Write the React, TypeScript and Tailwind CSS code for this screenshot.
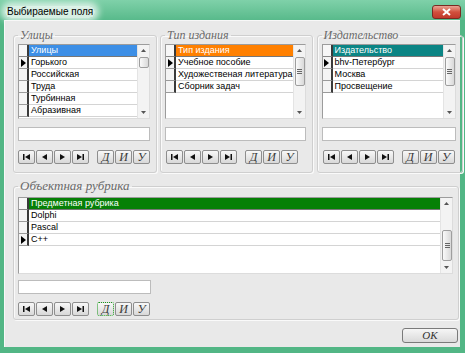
import React from 'react';

type GridProps = {
  header: string;
  color: string;
  rows: string[];
  current: number;
  h: string;
  thumbTop: string;
  thumbH: string;
  grip?: boolean;
};

function Tri() {
  return <div className="h-0 w-0 border-y-[4px] border-l-[5px] border-y-transparent border-l-black" />;
}

function Arrow({ up }: { up?: boolean }) {
  return (
    <div className="flex h-[11px] items-center justify-center">
      <svg width="5" height="3" viewBox="0 0 5 3">
        <polygon points={up ? '0,3 2.5,0 5,3' : '0,0 5,0 2.5,3'} fill="#555" />
      </svg>
    </div>
  );
}

function Grid({ header, color, rows, current, h, thumbTop, thumbH, grip }: GridProps) {
  return (
    <div className={`flex overflow-hidden border border-[#9c9c9c] border-r-[#dcdcdc] border-b-[#dcdcdc] bg-white ${h}`}>
      <div className="flex min-w-0 flex-1 flex-col">
        <div className="flex h-[12px] shrink-0">
          <div className="w-[10px] border-r-2 border-b border-r-[#3a3a3a] border-b-[#888] bg-[#f7f7f7]" />
          <div className={`flex-1 truncate border-b border-[#777] pl-[2px] text-[9px] leading-[11px] text-white ${color}`}>
            {header}
          </div>
        </div>
        {rows.map((r, i) => (
          <div key={r} className="flex h-[12px] shrink-0">
            <div className="flex w-[10px] items-center justify-center border-r-2 border-b border-r-[#3a3a3a] border-b-[#9a9a9a] bg-[#f4f4f4]">
              {i === current && <Tri />}
            </div>
            <div className="flex-1 truncate border-b border-[#d4d4d4] pl-[2px] text-[9px] leading-[11px] text-black">{r}</div>
          </div>
        ))}
      </div>
      <div className="flex w-[12px] shrink-0 flex-col border-l border-[#e4e4e4] bg-[#f3f3f3]">
        <Arrow up />
        <div className="flex-1">
          <div
            className={`ml-px flex w-[10px] flex-col items-center justify-center gap-px rounded-[2px] border border-[#9e9e9e] bg-gradient-to-r from-[#fafafa] to-[#d9d9d9] ${thumbTop} ${thumbH}`}
          >
            {grip && (
              <>
                <div className="h-px w-[5px] bg-[#666]" />
                <div className="h-px w-[5px] bg-[#666]" />
                <div className="h-px w-[5px] bg-[#666]" />
              </>
            )}
          </div>
        </div>
        <Arrow />
      </div>
    </div>
  );
}

function Btn({ children, focus }: { children: React.ReactNode; focus?: boolean }) {
  return (
    <div
      className={`flex h-[14px] w-[17px] items-center justify-center rounded-[2px] border bg-gradient-to-b from-[#f8f8f8] to-[#d8d8d8] ${
        focus ? 'border-dotted border-[#1a9a1a]' : 'border-[#8e8e8e]'
      }`}
    >
      {children}
    </div>
  );
}

function Nav({ focus }: { focus?: boolean }) {
  return (
    <div className="flex">
      <div className="flex gap-px">
        <Btn>
          <svg width="7" height="6" viewBox="0 0 7 6">
            <rect x="0" y="0" width="1.5" height="6" fill="#111" />
            <polygon points="7,0 2,3 7,6" fill="#111" />
          </svg>
        </Btn>
        <Btn>
          <svg width="5" height="6" viewBox="0 0 5 6">
            <polygon points="5,0 0,3 5,6" fill="#111" />
          </svg>
        </Btn>
        <Btn>
          <svg width="5" height="6" viewBox="0 0 5 6">
            <polygon points="0,0 5,3 0,6" fill="#111" />
          </svg>
        </Btn>
        <Btn>
          <svg width="7" height="6" viewBox="0 0 7 6">
            <polygon points="0,0 5,3 0,6" fill="#111" />
            <rect x="5.5" y="0" width="1.5" height="6" fill="#111" />
          </svg>
        </Btn>
      </div>
      <div className="ml-[8px] flex gap-px font-['Liberation_Serif',serif] text-[12px] italic leading-none text-[#3a3a3a]">
        <Btn focus={focus}>Д</Btn>
        <Btn>И</Btn>
        <Btn>У</Btn>
      </div>
    </div>
  );
}

function Group({ title, w, children }: { title: string; w: string; children: React.ReactNode }) {
  return (
    <fieldset
      className={`rounded-[3px] border border-[#cfcfcf] pr-[6px] pb-[8px] pl-[4px] shadow-[inset_1px_1px_0_#fafafa,1px_1px_0_#fafafa] ${w}`}
    >
      <legend className="px-[2px] font-['Liberation_Serif',serif] text-[12px] leading-[14px] italic text-[#6a6a6a]">
        {title}
      </legend>
      {children}
    </fieldset>
  );
}

export default function App() {
  return (
    <div className="flex h-[353px] w-[465px] flex-col bg-[#52b685] font-['Liberation_Sans',Arial,sans-serif]">
      {/* title bar */}
      <div className="flex h-[20px] shrink-0 items-start justify-between bg-gradient-to-b from-[#7fd1a9] to-[#58ba8b]">
        <div className="mt-[6px] ml-[5px] rounded-[6px] bg-white/75 px-[2px] text-[10px] leading-[12px] text-black shadow-[0_0_6px_4px_rgba(255,255,255,0.7)]">
          Выбираемые поля
        </div>
        <div className="mt-[5px] mr-[4px] flex h-[14px] w-[29px] items-center justify-center rounded-[3px] border border-[#7a2a22] bg-gradient-to-b from-[#e9a393] via-[#d2503d] to-[#c0392b]">
          <svg width="9" height="8" viewBox="0 0 9 8">
            <path d="M1 1 L8 7 M8 1 L1 7" stroke="#fff" strokeWidth="2" />
          </svg>
        </div>
      </div>

      {/* content */}
      <div className="mr-[5px] mb-[6px] ml-[4px] flex flex-1 flex-col border-t border-l border-[#f8f8f8] bg-[#e9e9e9] pt-[7px] pr-[2px] pl-[8px]">
        <div className="flex gap-[3px]">
          <Group title="Улицы" w="w-[146px]">
            <div className="mt-[2px]">
              <Grid
                header="Улицы"
                color="bg-[#3d8fe6]"
                rows={['Горького', 'Российская', 'Труда', 'Турбинная', 'Абразивная']}
                current={0}
                h="h-[75px]"
                thumbTop="mt-[1px]"
                thumbH="h-[11px]"
              />
            </div>
            <div className="mt-[8px] h-[14px] border border-[#bcbcbc] bg-white" />
            <div className="mt-[9px]">
              <Nav />
            </div>
          </Group>
          <Group title="Тип издания" w="w-[148px]">
            <div className="mt-[2px]">
              <Grid
                header="Тип издания"
                color="bg-[#ff8000]"
                rows={['Учебное пособие', 'Художественая литература', 'Сборник задач']}
                current={0}
                h="h-[75px]"
                thumbTop="mt-[1px]"
                thumbH="h-[29px]"
                grip
              />
            </div>
            <div className="mt-[8px] h-[14px] border border-[#bcbcbc] bg-white" />
            <div className="mt-[9px] pl-px">
              <Nav />
            </div>
          </Group>
          <div className="ml-px">
            <Group title="Издательство" w="w-[146px]">
              <div className="mt-[2px]">
                <Grid
                  header="Издательство"
                  color="bg-[#0b8585]"
                  rows={['bhv-Петербург', 'Москва', 'Просвещение']}
                  current={0}
                  h="h-[75px]"
                  thumbTop="mt-[1px]"
                  thumbH="h-[29px]"
                  grip
                />
              </div>
              <div className="mt-[8px] h-[14px] border border-[#bcbcbc] bg-white" />
              <div className="mt-[9px] pl-px">
                <Nav />
              </div>
            </Group>
          </div>
        </div>

        <div className="mt-[6px]">
          <fieldset className="w-[446px] rounded-[3px] border border-[#cfcfcf] pr-[5px] pb-[3px] pl-[4px] shadow-[inset_1px_1px_0_#fafafa,1px_1px_0_#fafafa]">
            <legend className="px-[2px] font-['Liberation_Serif',serif] text-[13px] leading-[14px] italic text-[#6a6a6a]">
              Объектная рубрика
            </legend>
            <div className="mt-[4px]">
              <Grid
                header="Предметная рубрика"
                color="bg-[#068006]"
                rows={['Dolphi', 'Pascal', 'C++']}
                current={2}
                h="h-[77px]"
                thumbTop="mt-[21px]"
                thumbH="h-[31px]"
                grip
              />
            </div>
            <div className="mt-[6px] h-[14px] w-[133px] border border-[#bcbcbc] bg-white" />
            <div className="mt-[8px]">
              <Nav focus />
            </div>
          </fieldset>
        </div>

        <div className="mt-[8px] flex justify-end">
          <div className="flex h-[15px] w-[56px] items-center justify-center rounded-[3px] border border-[#7a7a7a] bg-gradient-to-b from-[#f6f6f6] to-[#dadada] font-['Liberation_Serif',serif] text-[11px] italic text-[#333]">
            OK
          </div>
        </div>
      </div>
    </div>
  );
}
